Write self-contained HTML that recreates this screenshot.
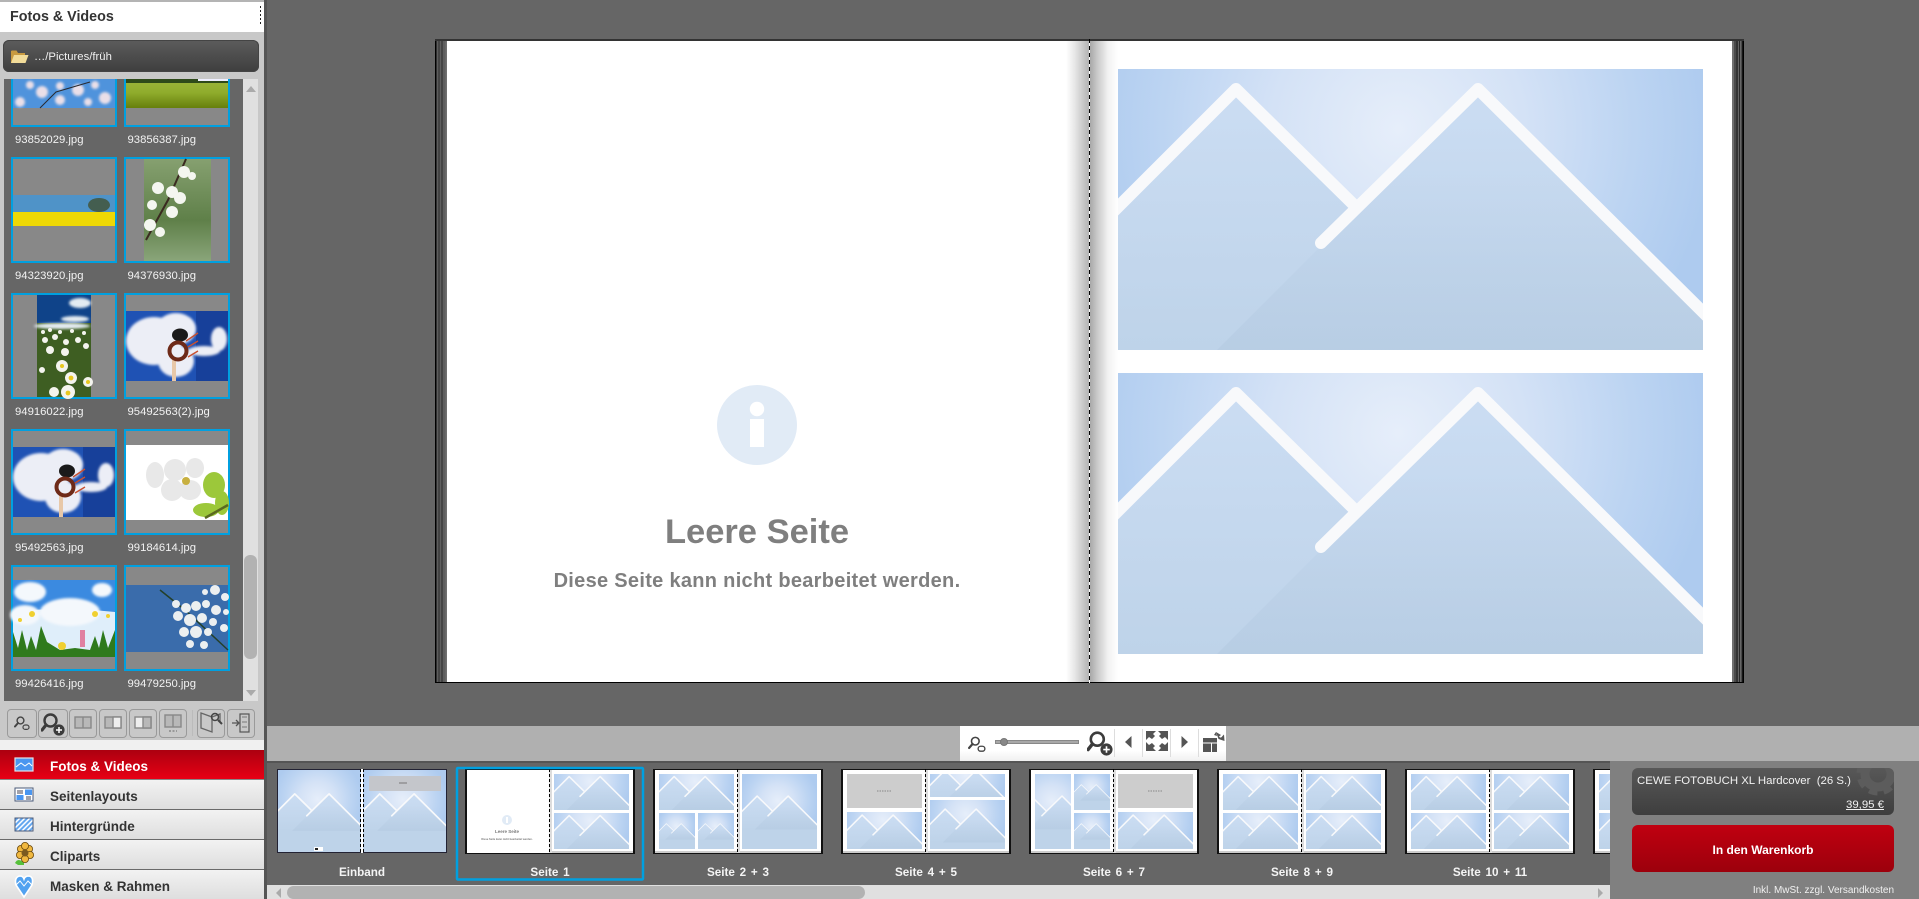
<!DOCTYPE html>
<html lang="de"><head><meta charset="utf-8"><title>Fotobuch</title>
<style>
html,body{margin:0;padding:0;width:1919px;height:899px;overflow:hidden;background:#666;font-family:"Liberation Sans",sans-serif}
#root{position:relative;width:1919px;height:899px;overflow:hidden}
.a{position:absolute}
svg{display:block}
.fn{position:absolute;color:#f2f2f2;font-size:11.3px;line-height:12px;white-space:nowrap}
.nav{position:absolute;left:0;width:264px;height:25px;padding-top:4px;overflow:hidden;border-bottom:1px solid #6a6a6a;background:linear-gradient(#f2f2f2,#dedede);box-sizing:content-box;color:#333;font-weight:bold;font-size:13.5px;line-height:25px;text-indent:50px}
.btn{position:absolute;top:709px;height:27px;border:1px solid #9a9a9a;border-radius:4px;box-sizing:content-box;background:#c8c8c8}
.lbl{position:absolute;top:866px;width:170px;text-align:center;color:#f4f4f4;font-weight:bold;font-size:11.7px;word-spacing:1.5px;line-height:14px;white-space:nowrap}
</style></head><body><div id="root">
<svg width="0" height="0" style="position:absolute"><defs>
<radialGradient id="sky" gradientUnits="userSpaceOnUse" cx="280" cy="60" r="315"><stop offset="0" stop-color="#e6eefa"/><stop offset=".4" stop-color="#d4e2f6"/><stop offset=".75" stop-color="#bcd4f2"/><stop offset="1" stop-color="#aecbef"/></radialGradient>
<linearGradient id="mt" gradientUnits="userSpaceOnUse" x1="0" y1="20" x2="0" y2="281"><stop offset="0" stop-color="#cbddf3"/><stop offset="1" stop-color="#bed3e9"/></linearGradient>
<linearGradient id="dk" gradientUnits="userSpaceOnUse" x1="0" y1="100" x2="0" y2="281"><stop offset="0" stop-color="#afc5dd" stop-opacity="0"/><stop offset="1" stop-color="#afc5dd" stop-opacity=".4"/></linearGradient>
<g id="mc"><rect x="0" y="0" width="585" height="281" fill="url(#sky)"/>
<path d="M0 138L118 20L237 137L360 20L585 243V281H0Z" fill="url(#mt)"/>
<path d="M99 281L360 20L585 243V281Z" fill="url(#dk)"/>
<path d="M-6 144L118 20L237 137M203 174L360 20L600 258" fill="none" stroke="#f8f9fb" stroke-width="12" stroke-linecap="round" stroke-linejoin="round"/></g>
<g id="mx"><rect x="-300" y="-300" width="1185" height="880" fill="url(#sky)"/>
<path d="M-300 438L118 20L237 137L360 20L885 540V580H-300Z" fill="url(#mt)"/>
<path d="M99 281L360 20L585 243V281Z" fill="url(#dk)"/>
<path d="M-6 144L118 20L237 137M203 174L360 20L600 258" fill="none" stroke="#f8f9fb" stroke-width="12" stroke-linecap="round" stroke-linejoin="round"/></g>
<symbol id="mb" viewBox="0 0 585 281" preserveAspectRatio="none"><use href="#mc"/></symbol>
<symbol id="m" viewBox="0 0 585 281" preserveAspectRatio="xMidYMid meet"><use href="#mx"/></symbol>
<symbol id="ms" viewBox="0 50 585 180" preserveAspectRatio="xMidYMid slice"><use href="#mx"/></symbol>
<symbol id="m3" viewBox="149 -152 281 586" preserveAspectRatio="none"><use href="#mx"/></symbol>
<g id="may"><rect width="102" height="70" fill="#1f52b4"/><rect x="70" width="32" height="70" fill="#17409a"/>
<g filter="url(#b1)" fill="#eceef6"><ellipse cx="28" cy="30" rx="28" ry="24"/><ellipse cx="50" cy="18" rx="20" ry="16"/><ellipse cx="50" cy="50" rx="18" ry="16"/><ellipse cx="78" cy="40" rx="16" ry="5"/><ellipse cx="93" cy="28" rx="8" ry="12"/></g>
<rect x="46" y="46" width="4" height="24" fill="#e8c8a8"/><ellipse cx="54" cy="24" rx="8" ry="6.500" fill="#1a1a1a"/>
<circle cx="52" cy="40" r="8.500" fill="none" stroke="#6e2a18" stroke-width="4"/><path d="M60 30L72 22M62 36L72 30M62 46L72 40" stroke="#c85030" stroke-width="1.400"/></g>
<filter id="b1"><feGaussianBlur stdDeviation="1.2"/></filter>
<symbol id="zp" viewBox="0 0 24 24"><circle cx="9.5" cy="8.5" r="6" fill="none" stroke="#3c3c3c" stroke-width="2.4"/><path d="M5 13L1 18" stroke="#3c3c3c" stroke-width="3.2" stroke-linecap="round"/><circle cx="18" cy="18" r="5.6" fill="#3c3c3c"/><path d="M15 18H21M18 15V21" stroke="#fff" stroke-width="1.5"/></symbol>
<symbol id="zm" viewBox="0 0 16 16"><circle cx="6.5" cy="5.5" r="3.4" fill="none" stroke="#444" stroke-width="1.4"/><path d="M4 8L1 11.5" stroke="#444" stroke-width="2" stroke-linecap="round"/><rect x="9" y="10" width="6" height="4.4" rx="2.2" fill="none" stroke="#444" stroke-width="1.2"/></symbol>
<linearGradient id="lawn" x1="0" y1="0" x2="0" y2="1"><stop offset="0" stop-color="#a6bc46"/><stop offset=".6" stop-color="#8fac2c"/><stop offset="1" stop-color="#667f0c"/></linearGradient>
</defs></svg>

<!-- LEFT PANEL -->
<div class="a" style="left:0;top:0;width:264px;height:899px;background:#c8c8c8"></div>
<div class="a" style="left:0;top:0;width:264px;height:2px;background:#b4b4b4"></div>
<div class="a" style="left:0;top:2px;width:264px;height:30px;background:#fff"></div>
<div class="a" style="left:10px;top:8px;font-weight:bold;font-size:14.3px;line-height:18px;color:#333">Fotos &amp; Videos</div>
<div class="a" style="left:259.5px;top:6px;width:1.5px;height:18px;background:repeating-linear-gradient(#222 0 2px,transparent 2px 4px)"></div>
<div class="a" style="left:3px;top:40px;width:256px;height:32px;border-radius:6px;background:linear-gradient(#5c5c5c,#3e3e3e);box-shadow:inset 0 0 0 1px #444"></div>
<svg class="a" style="left:10px;top:48px" width="19" height="16" viewBox="0 0 19 16"><path d="M1 3V15H15V5H8L6.5 2.5H2Z" fill="#c89a40"/><path d="M1 15L4 7H18.5L15.5 15Z" fill="#f2dc9a"/></svg>
<div class="a" style="left:34px;top:50px;color:#f0f0f0;font-size:11.3px;line-height:14px">…/Pictures/früh</div>

<div class="a" style="left:4px;top:79px;width:239px;height:622px;background:#666"></div>
<div class="a" style="left:243px;top:79px;width:15px;height:622px;background:#e0e0e0"></div>
<div class="a" style="left:244px;top:555px;width:13px;height:104px;background:#b2b2b2;border-radius:6px"></div>
<svg class="a" style="left:245px;top:85px" width="12" height="8"><path d="M1 7L6 1L11 7Z" fill="#aaa"/></svg>
<svg class="a" style="left:245px;top:689px" width="12" height="8"><path d="M1 1L6 7L11 1Z" fill="#aaa"/></svg>

<svg class="a" style="left:0;top:79px" width="243" height="622" viewBox="0 79 243 622">
<g fill="#888" stroke="#00a0e0" stroke-width="2">
<rect x="12" y="21" width="104" height="105"/><rect x="125" y="21" width="104" height="105"/>
<rect x="12" y="158" width="104" height="104"/><rect x="125" y="158" width="104" height="104"/>
<rect x="12" y="294" width="104" height="104"/><rect x="125" y="294" width="104" height="104"/>
<rect x="12" y="430" width="104" height="104"/><rect x="125" y="430" width="104" height="104"/>
<rect x="12" y="566" width="104" height="104"/><rect x="125" y="566" width="104" height="104"/>
</g>
<!-- r1 -->
<rect x="13" y="70" width="102" height="38" fill="#4f93dc"/>
<g fill="#eadfe8" filter="url(#b1)"><circle cx="30" cy="85" r="4"/><circle cx="42" cy="92" r="6"/><circle cx="60" cy="86" r="4"/><circle cx="60" cy="100" r="5"/><circle cx="78" cy="90" r="6"/><circle cx="95" cy="85" r="4"/><circle cx="105" cy="98" r="6"/><circle cx="20" cy="102" r="5"/><circle cx="88" cy="102" r="4"/></g>
<path d="M40 108L56 92L90 82" stroke="#2a2a30" fill="none"/>
<rect x="126" y="70" width="102" height="38" fill="url(#lawn)"/><rect x="126" y="70" width="102" height="13" fill="#2e4a1a"/><rect x="198" y="79" width="30" height="2" fill="#eef"/>
<!-- r2 -->
<rect x="13" y="195" width="102" height="17" fill="#4f93c8"/><ellipse cx="99" cy="205" rx="11" ry="7" fill="#445e50"/><rect x="13" y="212" width="102" height="14" fill="#eed805"/>
<defs><linearGradient id="gb" x1="0" y1="0" x2="0" y2="1"><stop offset="0" stop-color="#86a070"/><stop offset=".6" stop-color="#5f8049"/><stop offset="1" stop-color="#8aa57a"/></linearGradient></defs>
<rect x="144" y="159" width="67" height="102" fill="url(#gb)"/>
<path d="M186 159L168 200L146 240" stroke="#3a2a20" stroke-width="2" fill="none"/>
<g fill="#f4f6f0"><circle cx="184" cy="172" r="6"/><circle cx="192" cy="176" r="4"/><circle cx="158" cy="188" r="6"/><circle cx="172" cy="192" r="6"/><circle cx="180" cy="198" r="6"/><circle cx="152" cy="205" r="5"/><circle cx="172" cy="212" r="6"/><circle cx="150" cy="225" r="6"/><circle cx="160" cy="232" r="5"/></g>
<!-- r3 -->
<rect x="37" y="295" width="54" height="102" fill="#3e5e22"/><rect x="37" y="295" width="54" height="28" fill="#0f4389"/>
<g fill="#e4ecf2" filter="url(#b1)"><ellipse cx="80" cy="303" rx="11" ry="5"/><ellipse cx="75" cy="319" rx="14" ry="3"/><ellipse cx="62" cy="326" rx="28" ry="3"/></g>
<g fill="#f4f4ee"><circle cx="43" cy="332" r="2"/><circle cx="50" cy="330" r="2"/><circle cx="60" cy="332" r="2"/><circle cx="72" cy="331" r="2"/><circle cx="84" cy="333" r="2"/><circle cx="45" cy="340" r="3"/><circle cx="55" cy="337" r="3"/><circle cx="66" cy="342" r="3"/><circle cx="78" cy="340" r="3"/><circle cx="86" cy="346" r="3"/><circle cx="50" cy="350" r="4"/><circle cx="65" cy="352" r="4"/><circle cx="62" cy="366" r="6"/><circle cx="42" cy="370" r="3"/><circle cx="71" cy="378" r="6"/><circle cx="88" cy="382" r="5"/><circle cx="54" cy="392" r="5"/><circle cx="68" cy="392" r="7"/></g>
<g fill="#e8c820"><circle cx="62" cy="366" r="2"/><circle cx="71" cy="378" r="2.400"/><circle cx="68" cy="393" r="2.400"/><circle cx="88" cy="382" r="2"/></g>
<use href="#may" x="126" y="311"/><use href="#may" x="13" y="447"/>
<!-- r4 b -->
<rect x="126" y="445" width="102" height="75" fill="#fff"/>
<g fill="#e8e8e8"><ellipse cx="155" cy="475" rx="9" ry="13"/><ellipse cx="175" cy="470" rx="11" ry="11"/><ellipse cx="195" cy="468" rx="9" ry="10"/><ellipse cx="172" cy="490" rx="11" ry="11"/><ellipse cx="190" cy="490" rx="11" ry="10"/></g>
<circle cx="186" cy="481" r="4" fill="#c8b040"/>
<g fill="#9cc83a"><ellipse cx="214" cy="485" rx="11" ry="13"/><ellipse cx="206" cy="510" rx="13" ry="7"/><ellipse cx="222" cy="503" rx="7" ry="12"/></g><path d="M205 518L228 505" stroke="#5a6a20" stroke-width="2.500"/>
<!-- r5 a -->
<rect x="13" y="580" width="102" height="77" fill="#dfeefa"/>
<path d="M13 580H115V612Q60 606 13 612Z" fill="#3b8ae0"/>
<g fill="#f4f8fc" filter="url(#b1)"><ellipse cx="30" cy="592" rx="16" ry="10"/><ellipse cx="70" cy="612" rx="30" ry="14"/><ellipse cx="102" cy="590" rx="10" ry="7"/><ellipse cx="25" cy="615" rx="15" ry="10"/></g>
<path d="M13 657V632L18 648L22 630L27 650L31 636L36 650L41 626L47 642L60 650L75 648L90 650L95 636L99 648L103 630L108 648L115 630V657Z" fill="#2f7a1c"/>
<g fill="#f0d030"><circle cx="32" cy="614" r="3"/><circle cx="20" cy="620" r="2"/><circle cx="95" cy="614" r="3"/><circle cx="108" cy="616" r="2"/><circle cx="62" cy="646" r="4"/></g><rect x="80" y="630" width="5" height="17" fill="#e080a0"/>
<!-- r5 b -->
<rect x="126" y="585" width="102" height="67" fill="#3a6cab"/>
<path d="M160 590L185 610L228 650" stroke="#24402a" stroke-width="1.500" fill="none"/>
<g fill="#eceff0"><circle cx="215" cy="590" r="5"/><circle cx="205" cy="592" r="3"/><circle cx="225" cy="597" r="4"/><circle cx="176" cy="604" r="4"/><circle cx="186" cy="608" r="5"/><circle cx="196" cy="606" r="5"/><circle cx="206" cy="604" r="4"/><circle cx="216" cy="610" r="5"/><circle cx="226" cy="612" r="3"/><circle cx="178" cy="616" r="5"/><circle cx="190" cy="620" r="6"/><circle cx="202" cy="618" r="5"/><circle cx="213" cy="622" r="4"/><circle cx="184" cy="632" r="5"/><circle cx="196" cy="632" r="6"/><circle cx="208" cy="632" r="4"/><circle cx="190" cy="644" r="4"/><circle cx="204" cy="645" r="4"/><circle cx="224" cy="628" r="4"/></g>
</svg>
<div class="fn" style="left:15px;top:134px">93852029.jpg</div><div class="fn" style="left:127.5px;top:134px">93856387.jpg</div>
<div class="fn" style="left:15px;top:270px">94323920.jpg</div><div class="fn" style="left:127.5px;top:270px">94376930.jpg</div>
<div class="fn" style="left:15px;top:406px">94916022.jpg</div><div class="fn" style="left:127.5px;top:406px">95492563(2).jpg</div>
<div class="fn" style="left:15px;top:542px">95492563.jpg</div><div class="fn" style="left:127.5px;top:542px">99184614.jpg</div>
<div class="fn" style="left:15px;top:678px">99426416.jpg</div><div class="fn" style="left:127.5px;top:678px">99479250.jpg</div>

<!-- panel tool buttons -->
<div class="btn" style="left:7px;width:28px"></div><div class="btn" style="left:38px;width:28px"></div>
<div class="btn" style="left:69px;width:26px"></div><div class="btn" style="left:99px;width:26px"></div><div class="btn" style="left:129px;width:26px"></div><div class="btn" style="left:159px;width:26px"></div>
<div class="btn" style="left:197px;width:26px"></div><div class="btn" style="left:227px;width:26px"></div>
<svg class="a" style="left:14px;top:715px" width="16" height="16"><use href="#zm" width="16" height="16"/></svg>
<svg class="a" style="left:41px;top:712px" width="24" height="24"><use href="#zp" width="24" height="24"/></svg>
<svg class="a" style="left:0;top:700px" width="264" height="40" fill="none">
<g stroke="#888" stroke-width="1.4"><rect x="75" y="17" width="16" height="11" fill="#b8b8b8"/><path d="M83 17V28"/><rect x="105" y="17" width="16" height="11" fill="#b8b8b8"/><rect x="113" y="17" width="8" height="11" fill="#eee"/><rect x="135" y="17" width="16" height="11" fill="#eee"/><rect x="143" y="17" width="8" height="11" fill="#b8b8b8"/><rect x="165" y="15" width="16" height="12" fill="#b8b8b8"/><path d="M173 15V27"/><path d="M169 31H177" stroke-dasharray="2 1.5"/></g>
<path d="M201 13L212 17V32L201 28ZM212 17L220 14V22" stroke="#666" stroke-width="1.3"/><circle cx="215" cy="17" r="3.5" stroke="#444" stroke-width="1.5"/><path d="M218 20L222 24" stroke="#444" stroke-width="2"/>
<rect x="240" y="14" width="9" height="18" stroke="#555" stroke-width="1.2"/><path d="M232 23H238M236 20L239 23L236 26" stroke="#555" stroke-width="1.3"/><path d="M242 17H247M242 22H247M242 27H247" stroke="#888" stroke-width="1.2"/>
</svg>
<div class="a" style="left:192px;top:710px;width:1px;height:26px;background:#bbb"></div>

<!-- nav -->
<div class="a" style="left:0;top:740px;width:264px;height:10px;background:#f0f0f0"></div>
<div class="nav" style="top:750px;background:linear-gradient(#ac0010,#e80014);color:#fff;border-bottom:1px solid #888">Fotos &amp; Videos</div>
<div class="nav" style="top:780px">Seitenlayouts</div>
<div class="nav" style="top:810px">Hintergründe</div>
<div class="nav" style="top:840px">Cliparts</div>
<div class="nav" style="top:870px;border:0">Masken &amp; Rahmen</div>
<svg class="a" style="left:0;top:750px" width="48" height="149">
<rect x="15" y="8" width="18" height="13" fill="#4a96f0" stroke="#dfe4ea" stroke-width="1.2"/><path d="M16 17L21 13L25 16L29 13L32 16" stroke="#fff" fill="none"/>
<rect x="15" y="38" width="18" height="13" fill="#fff" stroke="#4a5a78" stroke-width="1"/><rect x="25" y="39.5" width="7" height="5.5" fill="#4a96f0"/><rect x="16.5" y="45" width="7" height="5" fill="#4a96f0"/><path d="M17 41H23M17 43H23M26 47H31M26 49H31" stroke="#445"/>
<defs><pattern id="hat" width="3.5" height="3.5" patternUnits="userSpaceOnUse" patternTransform="rotate(-45)"><rect width="3.5" height="3.5" fill="#fff"/><rect width="3.5" height="2" fill="#66a8f0"/></pattern></defs>
<rect x="15" y="68" width="18" height="13" fill="url(#hat)" stroke="#4a5a78"/>
<path d="M15 113Q18 107 24 113V115H18Z" fill="#56c03a"/><g fill="#f0b840" stroke="#6a4a10" stroke-width=".8"><circle cx="21" cy="99" r="3.6"/><circle cx="29" cy="99" r="3.6"/><circle cx="20" cy="105" r="3.6"/><circle cx="30" cy="105" r="3.6"/><circle cx="25" cy="109" r="3.6"/><circle cx="25" cy="96" r="3.6"/></g><circle cx="25" cy="103" r="3.5" fill="#7a5a20"/>
<path d="M24 147L16 135Q14 127 20 126Q23 126 24 129Q25 126 29 126Q34 127 32 135Z" fill="#52a2f0" stroke="#fff" stroke-width="1.6"/><path d="M16 135L20 131L24 136L28 131L32 135" stroke="#fff" fill="none"/>
</svg>
<div class="a" style="left:264px;top:0;width:3px;height:899px;background:#555"></div>

<!-- BOOK -->
<div class="a" style="left:435px;top:39px;width:1309px;height:644px;background:#333"></div>
<div class="a" style="left:435px;top:41px;width:12px;height:641px;background:linear-gradient(90deg,#000 0 1.6px,#5e5e5e 1.6px 3.4px,#2a2a2a 3.4px 4.4px,#5e5e5e 4.4px 6.6px,#2a2a2a 6.6px 7.6px,#5e5e5e 7.6px 10.6px,#707070 10.6px 12px)"></div>
<div class="a" style="left:1732px;top:41px;width:12px;height:641px;background:linear-gradient(90deg,#707070 0 2px,#4a4a4a 2px 4px,#333 4px 6px,#666 6px 7px,#2a2a2a 7px 8px,#666 8px 9.5px,#2a2a2a 9.5px 10.5px,#000 10.5px 12px)"></div>
<div class="a" style="left:447px;top:41px;width:1285px;height:641px;background:#fff"></div>
<div class="a" style="left:435px;top:682px;width:1309px;height:1px;background:#000"></div>
<div class="a" style="left:1066px;top:41px;width:24px;height:641px;background:linear-gradient(90deg,#fff,#e8e8e8 35%,#bcbcbc 85%,#b0b0b0)"></div>
<div class="a" style="left:1090px;top:41px;width:28px;height:641px;background:linear-gradient(90deg,#a8a8a8,#c8c8c8 25%,#f2f2f2 65%,#fff)"></div>
<div class="a" style="left:1089px;top:39px;width:1px;height:644px;background:repeating-linear-gradient(#000 0 4px,#fff 4px 7px)"></div>
<svg class="a" style="left:1118px;top:69px" width="585" height="281"><use href="#mb" width="585" height="281"/></svg>
<svg class="a" style="left:1118px;top:373px" width="585" height="281"><use href="#mb" width="585" height="281"/></svg>
<svg class="a" style="left:717px;top:385px" width="80" height="80"><circle cx="40" cy="40" r="40" fill="#e1ebf6"/><circle cx="40" cy="24" r="7.2" fill="#fff"/><rect x="33" y="34" width="14" height="28" fill="#fff"/></svg>
<div class="a" style="left:447px;top:510px;width:620px;text-align:center;font-weight:bold;font-size:34.5px;line-height:44px;color:#7f7f7f">Leere Seite</div>
<div class="a" style="left:447px;top:569px;width:620px;text-align:center;font-weight:bold;font-size:20px;line-height:24px;color:#7f7f7f;letter-spacing:.3px">Diese Seite kann nicht bearbeitet werden.</div>

<!-- TOOL STRIP -->
<div class="a" style="left:267px;top:726px;width:1652px;height:35px;background:#b0b0b0"></div>
<div class="a" style="left:267px;top:761px;width:1343px;height:2px;background:#555"></div>
<div class="a" style="left:960px;top:726px;width:266px;height:35px;background:linear-gradient(#fff 70%,#f0f0f0)"></div>
<svg class="a" style="left:968px;top:735px" width="18" height="18"><use href="#zm" width="18" height="18"/></svg>
<div class="a" style="left:995px;top:740px;width:84px;height:4px;background:#a8a8a8;border:1px solid #888;box-sizing:border-box"></div>
<div class="a" style="left:1000px;top:738px;width:8px;height:8px;border-radius:50%;background:#888;border:1px solid #777;box-sizing:border-box"></div>
<svg class="a" style="left:1087px;top:730px" width="26" height="26"><use href="#zp" width="26" height="26"/></svg>
<svg class="a" style="left:1114px;top:726px" width="112" height="35">
<g fill="#555"><path d="M17.500 10L11 16L17.500 22Z M67.500 10L74 16L67.500 22Z"/>
<path d="M32 5H42L39 8L41 10L38 13L35 11L32 14Z M54 5H44L47 8L45 10L48 13L51 11L54 14Z M32 25H42L39 22L41 20L38 17L35 19L32 16Z M54 25H44L47 22L45 20L48 17L51 19L54 16Z"/>
<rect x="89" y="12" width="14" height="4.500"/><rect x="89" y="17.500" width="8" height="8.500"/><rect x="98" y="17.500" width="5" height="8.500"/>
<path d="M102 6L107 9L105 10.500Q107 13 108.500 10L110 8.500L110.500 15L104.500 13Z M102 6L100 9L103 10Z"/></g>
<g stroke="#ddd"><path d="M.5 3V31M28.5 3V31M56.5 3V31M84.5 3V31"/></g></svg>

<!-- THUMB STRIP -->
<svg class="a" style="left:267px;top:762px" width="1343" height="123" viewBox="267 762 1343 123">
<defs>
<g id="sp"><rect width="170" height="85" fill="#111"/><rect x="2" y="1" width="166" height="83" fill="#fff"/><rect x="2" y="82" width="166" height="2" fill="#ccc"/><rect x="84" y="1" width="3" height="83" fill="#ddd"/><path d="M84.500 0V85" stroke="#000" stroke-dasharray="3 2" stroke-width="1"/></g>
<g id="gr"><rect width="75" height="34" fill="#cdcdcd"/><path d="M30 17H45" stroke="#888" stroke-dasharray="1.500 1"/></g>
</defs>
<!-- Einband -->
<g transform="translate(277,769)"><rect width="170" height="84" fill="#223"/><use href="#m" x="1" y="1" width="83" height="82"/><use href="#m" x="86" y="1" width="83" height="82"/><rect x="84" width="2" height="84" fill="#fff"/><path d="M83.500 0V84M86.500 0V84" stroke="#000" stroke-dasharray="3 2"/><rect x="92" y="7" width="72" height="15" fill="#c4c6cb"/><path d="M122 14H130" stroke="#777"/><rect x="37" y="78" width="9" height="4" fill="#fff"/><rect x="38" y="79" width="3" height="2" fill="#222"/></g>
<!-- Seite 1 -->
<g transform="translate(465,769)"><use href="#sp"/><rect x="2" y="1" width="82" height="83" fill="#fff"/><use href="#m" x="89" y="5" width="75" height="36"/><use href="#m" x="89" y="44" width="75" height="36"/><circle cx="42" cy="51" r="5" fill="#e1ebf6"/><rect x="41" y="48" width="2" height="6" fill="#fff"/><text x="42" y="64" font-size="4.500" text-anchor="middle" fill="#777" font-weight="bold" font-family="Liberation Sans">Leere Seite</text><text x="42" y="71" font-size="2.600" text-anchor="middle" fill="#777" font-weight="bold" font-family="Liberation Sans">Diese Seite kann nicht bearbeitet werden.</text></g>
<!-- 2+3 -->
<g transform="translate(653,769)"><use href="#sp"/><use href="#m" x="6" y="5" width="75" height="36"/><use href="#m" x="6" y="44" width="36" height="36"/><use href="#m" x="45" y="44" width="36" height="36"/><use href="#m" x="89" y="5" width="75" height="75"/></g>
<!-- 4+5 -->
<g transform="translate(841,769)"><use href="#sp"/><use href="#gr" x="6" y="5"/><use href="#m" x="6" y="43" width="75" height="37"/><use href="#ms" x="89" y="5" width="75" height="23"/><use href="#m" x="89" y="31" width="75" height="49"/></g>
<!-- 6+7 -->
<g transform="translate(1029,769)"><use href="#sp"/><use href="#m3" x="6" y="5" width="36" height="75"/><use href="#m" x="45" y="5" width="36" height="36"/><use href="#m" x="45" y="44" width="36" height="36"/><use href="#gr" x="89" y="5"/><use href="#m" x="89" y="43" width="75" height="37"/></g>
<!-- 8+9 -->
<g transform="translate(1217,769)"><use href="#sp"/><use href="#m" x="6" y="5" width="75" height="36"/><use href="#m" x="6" y="44" width="75" height="36"/><use href="#m" x="89" y="5" width="75" height="36"/><use href="#m" x="89" y="44" width="75" height="36"/></g>
<!-- 10+11 -->
<g transform="translate(1405,769)"><use href="#sp"/><use href="#m" x="6" y="5" width="75" height="36"/><use href="#m" x="6" y="44" width="75" height="36"/><use href="#m" x="89" y="5" width="75" height="36"/><use href="#m" x="89" y="44" width="75" height="36"/></g>
<g transform="translate(1593,769)"><use href="#sp"/><use href="#m" x="6" y="5" width="75" height="36"/><use href="#m" x="6" y="44" width="75" height="36"/></g>
<rect x="457" y="768" width="186" height="111.500" fill="none" stroke="#00a0e0" stroke-width="2.500" rx="1"/>
</svg>
<div class="lbl" style="left:277px">Einband</div><div class="lbl" style="left:465px">Seite 1</div><div class="lbl" style="left:653px">Seite 2 + 3</div><div class="lbl" style="left:841px">Seite 4 + 5</div><div class="lbl" style="left:1029px">Seite 6 + 7</div><div class="lbl" style="left:1217px">Seite 8 + 9</div><div class="lbl" style="left:1405px">Seite 10 + 11</div>

<!-- H scrollbar -->
<div class="a" style="left:267px;top:885px;width:1343px;height:14px;background:#e0e0e0"></div>
<div class="a" style="left:287px;top:886px;width:578px;height:13px;background:#b2b2b2;border-radius:7px"></div>
<svg class="a" style="left:274px;top:887px" width="10" height="12"><path d="M7 1L2 6L7 11Z" fill="#aaa"/></svg>
<svg class="a" style="left:1596px;top:887px" width="10" height="12"><path d="M2 1L7 6L2 11Z" fill="#aaa"/></svg>

<!-- RIGHT BOX -->
<div class="a" style="left:1610px;top:761px;width:309px;height:138px;background:#808080"></div>
<div class="a" style="left:1632px;top:768px;width:262px;height:47px;border-radius:6px;background:linear-gradient(#585858,#3e3e3e);overflow:hidden">
<svg class="a" style="left:224px;top:-16px" width="46" height="46"><circle cx="22" cy="22" r="13" fill="none" stroke="#5c5c5c" stroke-width="9"/><circle cx="22" cy="22" r="17.500" fill="none" stroke="#5c5c5c" stroke-width="8" stroke-dasharray="8 6"/></svg>
<div class="a" style="left:5px;top:6px;color:#f2f2f2;font-size:11.400px;line-height:14px;white-space:pre">CEWE FOTOBUCH XL Hardcover  (26 S.)</div>
<div class="a" style="right:10px;top:30px;color:#f2f2f2;font-size:11.400px;line-height:14px;text-decoration:underline">39,95 €</div>
</div>
<div class="a" style="left:1632px;top:825px;width:262px;height:47px;border-radius:6px;background:linear-gradient(#c00010,#9c000c);color:#fff;font-weight:bold;font-size:12px;line-height:50px;text-align:center;overflow:hidden">In den Warenkorb</div>
<div class="a" style="left:1632px;top:884px;width:262px;text-align:right;color:#f0f0f0;font-size:10px;line-height:13px;white-space:nowrap">Inkl. MwSt. zzgl. Versandkosten</div>
</div></body></html>
